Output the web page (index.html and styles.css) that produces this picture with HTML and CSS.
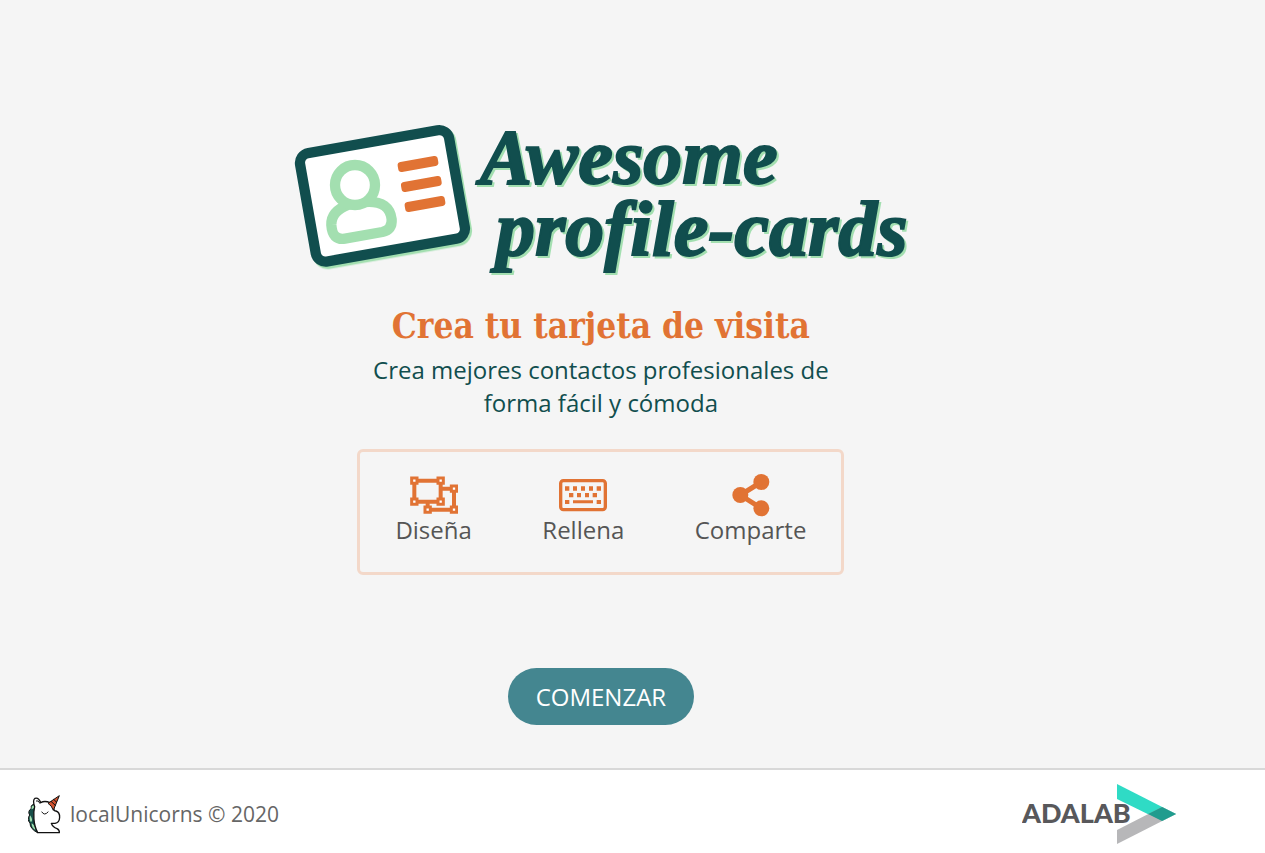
FILE: index.html
```html
<!DOCTYPE html>
<html lang="es">
<head>
<meta charset="utf-8">
<meta name="viewport" content="width=device-width, initial-scale=1">
<title>Awesome profile-cards</title>
<link rel="stylesheet" href="styles.css">
</head>
<body>
<main class="landing">
  <h1 class="brand">
    <svg class="brand-logo" viewBox="0 0 616 160" role="img" aria-label="Awesome profile-cards">
      <g class="shadowed" transform="translate(-8 -10) scale(.33333)">
        <rect x="50" y="77" width="485" height="361" rx="46" transform="rotate(-10 292.5 258)" fill="#114e4e"/>
        <rect x="81" y="108" width="423" height="299" rx="13" transform="rotate(-10 292.5 258)" fill="#fff"/>
      </g>
      <g transform="translate(-8 -10) scale(.33333)">
        <g fill="none" stroke="#a3dfb0" stroke-width="31" stroke-linejoin="round">
          <path d="M190 284C154 298 138 318 139 345Q142 392 180 386L292 366Q322 359 320 328C316 294 294 272 240 276Z"/>
          <circle cx="210" cy="225" r="60" fill="#fff"/>
        </g>
        <g fill="#e17334">
          <rect x="338" y="147" width="122" height="30" rx="10" transform="rotate(-10 399 162)"/>
          <rect x="348" y="207" width="122" height="30" rx="10" transform="rotate(-10 409 222)"/>
          <rect x="359" y="267" width="122" height="30" rx="10" transform="rotate(-10 420 282)"/>
        </g>
      </g>
      <text class="wordmark" x="187" y="63">Awesome</text>
      <text class="wordmark" x="203" y="135">profile-cards</text>
    </svg>
  </h1>
  <h2 class="title">Crea tu tarjeta de visita</h2>
  <p class="subtitle">Crea mejores contactos profesionales de forma fácil y cómoda</p>
  <ul class="steps">
    <li class="step">
      <svg class="step-icon" viewBox="177 96 144 138" aria-hidden="true">
        <g fill="none" stroke="#e17334">
          <path stroke-width="12" d="M190 122H269V185H190ZM275 146H309V209H230V190"/>
          <path stroke-width="9" fill="#fff" d="M182 114h16v16h-16zM261 114h16v16h-16zM182 177h16v16h-16zM261 177h16v16h-16zM301 138h16v16h-16zM301 201h16v16h-16zM222 201h16v16h-16z"/>
        </g>
      </svg>
      <span>Diseña</span>
    </li>
    <li class="step">
      <svg class="step-icon" viewBox="627 96 144 138" aria-hidden="true">
        <rect x="632" y="122" width="134" height="87" rx="8" fill="none" stroke="#e17334" stroke-width="10"/>
        <path fill="#e17334" d="M645 139h13v13h-13zM669 139h12v13h-12zM693 139h12v13h-12zM717 139h12v13h-12zM740 139h13v13h-13zM657 159h13v13h-13zM681 159h12v13h-12zM705 159h12v13h-12zM728 159h13v13h-13zM645 180h13v12h-13zM669 181h60v9h-60zM740 180h13v12h-13z"/>
      </svg>
      <span>Rellena</span>
    </li>
    <li class="step">
      <svg class="step-icon" viewBox="379 96 144 138" aria-hidden="true">
        <g fill="#e17334">
          <circle cx="482" cy="126" r="24"/><circle cx="419" cy="165" r="24"/><circle cx="482" cy="205" r="24"/>
        </g>
        <path d="M482 126L419 165L482 205" fill="none" stroke="#e17334" stroke-width="15"/>
      </svg>
      <span>Comparte</span>
    </li>
  </ul>
  <a class="start" href="#crear">COMENZAR</a>
</main>
<footer class="footer">
  <div class="footer-inner">
    <div class="team">
      <svg class="unicorn" viewBox="22 18 99 117" aria-hidden="true">
        <path fill="#174f49" stroke="#111" stroke-width="3" d="M43 46Q29 46 32 58Q20 67 27 78Q18 92 28 102Q28 120 51 131Z"/>
        <path fill="#a3dfb0" d="M42 48Q31 49 33 61Q42 59 42 48ZM28 79Q25 93 31 100Q39 92 28 79ZM33 103Q32 116 45 124Q42 108 33 103Z"/>
        <path fill="#fff" stroke="#111" stroke-width="4" stroke-linejoin="round" d="M51 131C38 108 37 72 42 53Q35 34 43 28Q54 25 60 41Q72 34 88 41L99 58Q100 67 106 66C121 71 121 100 103 103H92Q96 115 109 119Q117 123 116 131Z"/>
        <path fill="none" stroke="#111" stroke-width="3" d="M46 36Q54 32 58 44M63 68Q71 82 83 68"/>
        <path fill="#d4532f" stroke="#111" stroke-width="3" stroke-linejoin="round" d="M82 43L116 20L98 64Q93 49 82 43ZM91 37L105 50M99 31L109 41"/>
      </svg>
      <small class="copyright">localUnicorns © 2020</small>
    </div>
    <a class="adalab" href="#adalab">
      <svg class="adalab-logo" viewBox="0 0 154 60" role="img" aria-label="Adalab">
        <path fill="#2fdbc5" d="M95 0L154 30L140 37L95 15Z"/>
        <path fill="#b7b7b9" d="M95 60V46L140 23L154 30Z"/>
        <path fill="#209c8e" d="M126 30L140 23L154 30L140 37Z"/>
        <text class="adalab-name" x="0" y="39">ADALAB</text>
      </svg>
    </a>
  </div>
</footer>
</body>
</html>
```
FILE: styles.css
```css
* {
  box-sizing: border-box;
}

body {
  margin: 0;
  min-height: 100vh;
  display: flex;
  flex-direction: column;
  background: #f5f5f5;
  color: #555;
  font-family: "Open Sans", sans-serif;
  font-size: 24px;
}

.landing {
  flex: 1;
  width: 95%;
  padding: 120px 24px 41px;
  display: flex;
  flex-direction: column;
  align-items: center;
}

.brand {
  width: 100%;
  max-width: 616px;
  margin: 0;
}

.brand-logo {
  display: block;
  width: 100%;
  overflow: visible;
}

.shadowed {
  filter: drop-shadow(6px 7px 0 #a3dfb0);
}

.wordmark {
  fill: #114e4e;
  stroke: #114e4e;
  stroke-width: 2px;
  font: italic bold 78px "Liberation Serif", serif;
  filter: drop-shadow(2px 2px 0 #a3dfb0);
}

.title {
  margin: 19px 0 0;
  color: #e17334;
  font: bold 35px/54px "DejaVu Serif Condensed", "DejaVu Serif", serif;
  text-align: center;
}

.subtitle {
  max-width: 486px;
  margin: 0;
  color: #114e4e;
  line-height: 33px;
  text-align: center;
}

.steps {
  width: 100%;
  max-width: 487px;
  margin: 30px 0 0;
  padding: 20px 35px 30px;
  display: flex;
  justify-content: space-between;
  list-style: none;
  border: 3px solid #f3d8c9;
  border-radius: 6px;
}

.step {
  display: flex;
  flex-direction: column;
  align-items: center;
  line-height: 24px;
}

.step-icon {
  width: 48px;
  height: 46px;
}

.start {
  margin-top: 93px;
  padding: 12px 28px;
  border-radius: 29px;
  background: #448690;
  color: #fff;
  line-height: 33px;
  text-decoration: none;
}

.footer {
  border-top: 2px solid #d8d8d8;
  background: #fff;
}

.footer-inner {
  max-width: 1200px;
  padding: 14px 24px 9px 28px;
  display: flex;
  justify-content: space-between;
  align-items: center;
}

.team {
  display: flex;
  align-items: center;
  gap: 9px;
}

.unicorn {
  width: 33px;
  height: 39px;
}

.copyright {
  color: #666;
  font-size: 21px;
  line-height: 24px;
}

.adalab-logo {
  display: block;
  width: 154px;
  height: 60px;
}

.adalab-name {
  fill: #58585b;
  font: 900 27px Lato, sans-serif;
}
```
